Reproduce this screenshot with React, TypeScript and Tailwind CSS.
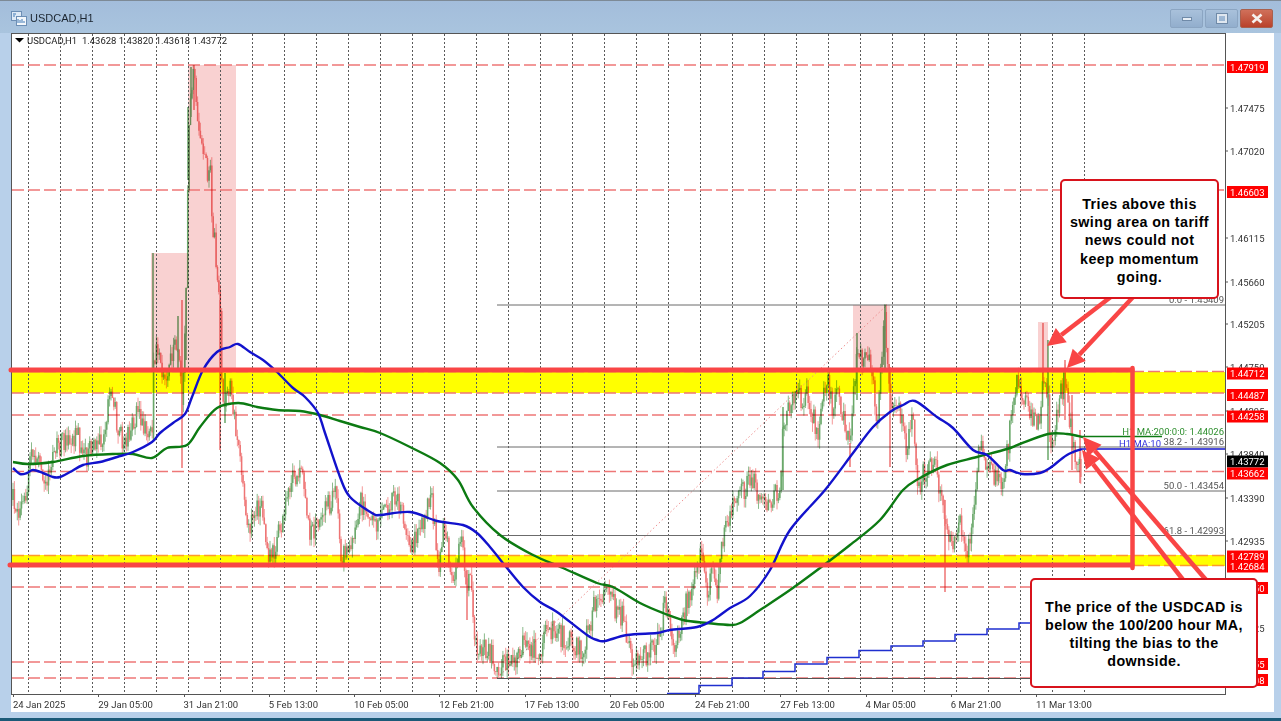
import React from 'react';

// rough price path, page pixel coordinates
const PATH: number[][] = [
  [13,500],[18,515],[27,495],[29,460],[40,455],[47,490],[53,455],[60,445],[70,440],[78,432],[83,462],[97,440],[102,447],[112,385],[118,430],[125,445],[135,415],[147,430],[152,440],[154,350],[160,360],[165,385],[172,355],[178,340],[182,400],[186,320],[188,150],[191,90],[194,68],[197,115],[200,125],[203,145],[207,170],[210,165],[212,225],[215,245],[218,280],[220,290],[222,400],[225,395],[230,390],[235,423],[240,455],[243,490],[247,530],[253,515],[262,500],[266,547],[272,558],[278,537],[283,520],[295,473],[302,475],[310,530],[320,530],[325,510],[337,495],[340,553],[347,558],[360,500],[377,527],[397,493],[410,553],[432,497],[438,570],[443,527],[453,577],[462,533],[467,600],[470,575],[475,647],[487,650],[493,655],[498,675],[508,655],[513,665],[523,645],[540,653],[548,625],[560,635],[583,653],[597,593],[608,598],[623,618],[633,660],[642,658],[660,640],[665,597],[675,647],[690,590],[702,555],[707,590],[713,575],[717,590],[723,540],[730,510],[750,480],[770,505],[780,490],[783,430],[792,403],[807,393],[818,437],[827,373],[832,407],[837,393],[850,443],[857,350],[860,360],[867,345],[872,367],[877,430],[885,315],[890,400],[897,393],[907,453],[912,407],[917,490],[925,470],[935,460],[945,530],[950,545],[960,520],[968,550],[975,500],[980,440],[985,470],[1003,482],[1017,380],[1033,420],[1040,430],[1043,370],[1048,400],[1050,455],[1058,410],[1065,375],[1072,440],[1080,470],
];

// long wicks that the noise would not produce: x, top, bottom, up?
const SPIKES: [number, number, number, boolean][] = [
  [153,253,370,true],[153.5,370,440,true],[188,107,180,true],[191,67,117,true],[194,65,110,false],[182,300,468,false],[178,316,370,true],[186,288,360,true],[220,300,450,false],[225,373,423,true],[1043,323,390,false],[1048,340,460,true],[1065,360,420,false],[1072,395,470,false],[1080,430,483,false],[885,305,370,true],[857,333,400,true],[783,407,490,true],[890,367,467,false],[945,500,592,false],[850,443,467,false],[467,570,620,false],
];

const MA100 = [[13,468],[20,474],[27,473],[33,470],[43,473],[53,477],[60,477],[70,472],[83,465],[100,462],[117,457],[133,452],[152,442],[160,433],[173,423],[185,414],[192,397],[203,370],[217,352],[230,347],[238,344],[250,352],[263,360],[277,372],[293,388],[305,397],[318,413],[325,433],[340,477],[350,497],[372,513],[380,515],[410,512],[437,521],[463,525],[477,533],[490,547],[507,568],[523,587],[540,602],[557,612],[587,635],[597,640],[605,641],[627,635],[657,633],[670,630],[697,627],[713,620],[730,608],[750,596],[770,570],[790,530],[825,490],[853,453],[873,427],[890,412],[903,405],[915,401],[937,417],[953,428],[973,450],[987,455],[1003,470],[1010,470],[1022,474],[1040,473],[1050,468],[1067,455],[1082,449]];
const MA200 = [[13,462],[28,464],[53,462],[83,456],[113,454],[133,454],[152,458],[167,448],[187,445],[200,427],[217,408],[238,403],[257,407],[277,410],[300,411],[320,415],[340,421],[360,427],[380,433],[410,447],[440,463],[458,480],[473,507],[500,535],[533,555],[563,568],[597,583],[613,587],[640,603],[663,613],[683,620],[707,623],[730,625],[740,623],[760,610],[790,590],[820,568],[850,545],[880,520],[903,490],[920,478],[947,465],[977,457],[1007,449],[1020,444],[1048,434],[1067,434],[1083,437]];
const STEPS = '667,693.5 699,693.5 699,685.5 732,685.5 732,678 763,678 763,671.5 795,671.5 795,664 827,664 827,657.5 859,657.5 859,650.5 891,650.5 891,646 923,646 923,641 955,641 955,634.5 987,634.5 987,629 1019,629 1019,623 1040,623';

const GRID = Array.from({ length: 34 }, (_, i) => 28 + i * 32);
const DASHED = [65, 190, 371.5, 393, 415, 471.5, 587, 662, 678];
const FIBS = [
  { y: 305, label: '0.0 - 1.45409' },
  { y: 447, label: '38.2 - 1.43916' },
  { y: 491, label: '50.0 - 1.43454' },
  { y: 535.5, label: '61.8 - 1.42993' },
];
const PRICES = [
  { y: 108, t: '1.47475' }, { y: 151, t: '1.47020' }, { y: 238, t: '1.46115' }, { y: 282, t: '1.45660' },
  { y: 324, t: '1.45205' }, { y: 367, t: '1.44750' }, { y: 411, t: '1.44295' }, { y: 454, t: '1.43840' },
  { y: 498, t: '1.43390' }, { y: 541, t: '1.42935' }, { y: 585, t: '1.42480' }, { y: 628, t: '1.42025' },
];
const TAGS = [
  { y: 67, t: '1.47919' }, { y: 192, t: '1.46603' }, { y: 373.5, t: '1.44712' }, { y: 395, t: '1.44487' },
  { y: 416.5, t: '1.44258' }, { y: 461.5, t: '1.43772', black: true }, { y: 473.5, t: '1.43662' },
  { y: 556.5, t: '1.42789' }, { y: 566.5, t: '1.42684' }, { y: 588, t: '1.42450' }, { y: 664, t: '1.41655' }, { y: 680, t: '1.41508' },
];
const DATES = ['24 Jan 2025', '29 Jan 05:00', '31 Jan 21:00', '5 Feb 13:00', '10 Feb 05:00', '12 Feb 21:00', '17 Feb 13:00', '20 Feb 05:00', '24 Feb 21:00', '27 Feb 13:00', '4 Mar 05:00', '6 Mar 21:00', '11 Mar 13:00'];

function interp(x: number) {
  for (let i = 1; i < PATH.length; i++) {
    if (x <= PATH[i][0]) {
      const [x0, y0] = PATH[i - 1];
      const [x1, y1] = PATH[i];
      return y0 + ((y1 - y0) * (x - x0)) / (x1 - x0);
    }
  }
  return PATH[PATH.length - 1][1];
}

function buildCandles() {
  let seed = 4711;
  const rnd = () => {
    seed = (seed * 16807) % 2147483647;
    return seed / 2147483647;
  };
  const up = { wick: '', body: '' };
  const down = { wick: '', body: '' };
  let prev = interp(13);
  for (let x = 13; x <= 1081; x += 1.42) {
    const close = interp(x) + (rnd() - 0.5) * 24;
    const top = Math.max(65, Math.min(prev, close) - rnd() * 9);
    const bottom = Math.min(678, Math.max(prev, close) + rnd() * 9);
    const bucket = close < prev ? up : down;
    bucket.wick += `M${x.toFixed(1)} ${top.toFixed(1)}V${bottom.toFixed(1)}`;
    bucket.body += `M${x.toFixed(1)} ${Math.max(65, Math.min(prev, close)).toFixed(1)}V${Math.min(678, Math.max(prev, close)).toFixed(1)}`;
    prev = close;
  }
  for (const [x, a, b, isUp] of SPIKES) {
    (isUp ? up : down).body += `M${x} ${a}V${b}`;
  }
  return { up, down };
}

const candles = buildCandles();

// catmull-rom through the points so the averages bend instead of kinking
function smooth(pts: number[][]) {
  let d = `M${pts[0][0]} ${pts[0][1]}`;
  for (let i = 0; i < pts.length - 1; i++) {
    const p0 = pts[Math.max(i - 1, 0)];
    const p1 = pts[i];
    const p2 = pts[i + 1];
    const p3 = pts[Math.min(i + 2, pts.length - 1)];
    const c1x = p1[0] + (p2[0] - p0[0]) / 6;
    const c1y = p1[1] + (p2[1] - p0[1]) / 6;
    const c2x = p2[0] - (p3[0] - p1[0]) / 6;
    const c2y = p2[1] - (p3[1] - p1[1]) / 6;
    d += `C${c1x.toFixed(1)} ${c1y.toFixed(1)} ${c2x.toFixed(1)} ${c2y.toFixed(1)} ${p2[0]} ${p2[1]}`;
  }
  return d;
}

// line with a filled triangular head, all in page pixels
const Arrow = ({ from, to }: { from: number[]; to: number[] }) => {
  const dx = to[0] - from[0];
  const dy = to[1] - from[1];
  const len = Math.hypot(dx, dy);
  const ux = dx / len;
  const uy = dy / len;
  const bx = to[0] - ux * 18;
  const by = to[1] - uy * 18;
  const head = `${to[0]},${to[1]} ${bx - uy * 9},${by + ux * 9} ${bx + uy * 9},${by - ux * 9}`;
  return (
    <g>
      <line x1={from[0]} y1={from[1]} x2={bx} y2={by} stroke="#f94545" strokeWidth={4.5} />
      <polygon points={head} fill="#f94545" />
    </g>
  );
};

const App = () => {
  return (
    <div className="relative w-[1281px] h-[721px] flex flex-col overflow-hidden bg-[#b8d0ea] font-['Liberation_Sans',sans-serif]">
      {/* Title bar */}
      <div className="h-[33px] flex items-start border-t border-[#7d8a96] bg-gradient-to-b from-[#a3bddb] to-[#a9c4de]">
        <svg width="16" height="15" viewBox="0 0 16 15" className="ml-[11px] mt-[10px]">
          <rect x="0.5" y="0.5" width="10" height="9" fill="#dfeaf6" stroke="#6d8fb5" />
          <rect x="5.5" y="5.5" width="10" height="9" fill="#f3f7fb" stroke="#6d8fb5" />
          <path d="M2 3h3M2 5h2M7 8v4M9 9v3M11 8v4M13 10v2" stroke="#3f78b5" strokeWidth="1" />
        </svg>
        <span className="ml-[3px] mt-[9px] text-[11px] leading-[16px] text-[#1b2530]">USDCAD,H1</span>
        <div className="ml-auto mr-[8px] mt-[8px] flex gap-[2px]">
          <div className="w-[33px] h-[19px] flex items-center justify-center rounded-[2px] border border-[#8ba5c2] bg-gradient-to-b from-[#a9c1db] to-[#92aecd]">
            <div className="w-[10px] h-[4px] bg-[#e8eef5] border border-[#6f8aa8]" />
          </div>
          <div className="w-[33px] h-[19px] flex items-center justify-center rounded-[2px] border border-[#8ba5c2] bg-gradient-to-b from-[#a9c1db] to-[#92aecd]">
            <div className="w-[10px] h-[9px] border-2 border-[#dfe7f0] outline outline-1 outline-[#6f8aa8]" />
          </div>
          <div className="w-[33px] h-[19px] flex items-center justify-center rounded-[2px] border border-[#a8604e] bg-gradient-to-b from-[#d0705a] to-[#b9412a]">
            <svg width="12" height="11" viewBox="0 0 12 11">
              <path d="M1.5 1.5l9 8M10.5 1.5l-9 8" stroke="#f6f1ee" strokeWidth="2.6" />
            </svg>
          </div>
        </div>
      </div>

      {/* Chart window */}
      <div className="h-[679px] pl-[11px] pr-[7px]">
        <div className="h-full flex flex-col bg-white">
          <div className="flex">
            <div className="relative w-[1215px] h-[662px] border border-[#555]">
              <svg viewBox="12 34 1213 660" className="block w-[1213px] h-[660px]">
                {[[151, 253, 37, 117], [188, 65, 48, 305], [853, 305, 37, 65], [1038, 322, 10, 48]].map(([x, y, w, h]) => (
                  <rect key={x} x={x} y={y} width={w} height={h} fill="#f9d1d1" />
                ))}
                <rect x="12" y="372" width="1213" height="21" fill="#ffff00" />
                <rect x="12" y="555" width="1213" height="11" fill="#ffff00" />

                {GRID.map((x) => (
                  <line key={x} x1={x + 0.5} y1="34" x2={x + 0.5} y2="694" stroke="#5a5a5a" strokeDasharray="2 2" />
                ))}
                {DASHED.map((y) => (
                  <line key={y} x1="12" y1={y} x2="1225" y2={y} stroke="#ee7777" strokeWidth="1.3" strokeDasharray="12 4" />
                ))}
                <line x1="12" y1="555.5" x2="1225" y2="555.5" stroke="#ff9a2a" strokeWidth="1.4" strokeDasharray="12 4" />
                <line x1="12" y1="565.5" x2="1225" y2="565.5" stroke="#ff9a2a" strokeWidth="1.4" strokeDasharray="12 4" />

                {/* fib retracement */}
                <line x1="497" y1="678" x2="887" y2="305" stroke="#ef8f8f" strokeDasharray="1.5 2.5" />
                {FIBS.map((f) => (
                  <g key={f.y}>
                    <line x1="497" y1={f.y} x2="1225" y2={f.y} stroke="#6b6b6b" />
                    <text x="1224" y={f.y - 2} textAnchor="end" className="fill-[#555] text-[9.5px] font-['Roboto']">{f.label}</text>
                  </g>
                ))}
                <line x1="497" y1="678.5" x2="1225" y2="678.5" stroke="#555" />

                {/* candles */}
                <g className="mix-blend-multiply" fill="none">
                  <path d={candles.down.wick} stroke="#f27d7d" strokeWidth="0.8" />
                  <path d={candles.up.wick} stroke="#6da86d" strokeWidth="0.8" />
                  <path d={candles.down.body} stroke="#ee7474" strokeWidth="1.5" />
                  <path d={candles.up.body} stroke="#6aa86a" strokeWidth="1.5" />
                </g>

                <polyline points={STEPS} fill="none" stroke="#1f2fcf" strokeWidth="1.5" />
                <path d={smooth(MA200)} fill="none" stroke="#0c7a12" strokeWidth="2.4" />
                <path d={smooth(MA100)} fill="none" stroke="#1212cc" strokeWidth="2.4" />
                <line x1="1083" y1="436.5" x2="1162" y2="436.5" stroke="#0c7a12" strokeWidth="1.4" />
                <line x1="1082" y1="449" x2="1225" y2="449" stroke="#1212cc" strokeWidth="1.6" />
                <text x="1224" y="435" textAnchor="end" className="fill-[#2f8f2f] text-[9.5px] font-['Roboto']">H1 MA:200:0:0: 1.44026</text>
                <text x="1161" y="447" textAnchor="end" className="fill-[#3030dd] text-[9.5px] font-['Roboto']">H1 MA:10</text>

                <path d="M15 38h9l-4.5 4.5z" fill="#000" />
                <text x="27" y="44" className="fill-[#222] text-[9.5px] font-['Roboto']" xmlSpace="preserve">USDCAD,H1  1.43628 1.43820 1.43618 1.43772</text>
              </svg>
            </div>

            {/* Price axis */}
            <svg viewBox="1226 33 48 662" className="block w-[48px] h-[662px]">
              {PRICES.map((p) => (
                <g key={p.t}>
                  <line x1="1226" y1={p.y} x2="1228" y2={p.y} stroke="#555" />
                  <text x="1230" y={p.y + 3.5} className="fill-[#333] text-[9.5px] font-['Roboto']">{p.t}</text>
                </g>
              ))}
              {TAGS.map((p) => (
                <g key={p.t}>
                  <rect x="1227" y={p.y - 6} width="41" height="12" fill={p.black ? '#000' : '#ff0000'} />
                  <text x="1230" y={p.y + 3.5} className="fill-white text-[9.5px] font-['Roboto']">{p.t}</text>
                </g>
              ))}
            </svg>
          </div>

          {/* Time axis */}
          <div className="flex pl-[2px]">
            {DATES.map((d) => (
              <div key={d} className="w-[85.25px] shrink-0">
                <div className="w-px h-[2px] bg-[#555]" />
                <div className="mt-[2px] text-[9.5px] leading-[12px] text-[#333] font-['Roboto']">{d}</div>
              </div>
            ))}
          </div>
        </div>
      </div>

      <div className="h-[6px]" />
      <div className="flex-1 bg-[#1c5a78]" />

      {/* Hand-drawn annotations */}
      <svg viewBox="0 0 1281 721" className="absolute inset-0 w-[1281px] h-[721px] pointer-events-none">
        <path d="M11 370H1132M10 565H1132" stroke="#f94545" strokeWidth="5" strokeLinecap="round" />
        <path d="M1132.5 368V568" stroke="#f94545" strokeWidth="4.5" strokeLinecap="round" />
        <Arrow from={[1112, 296]} to={[1047, 346]} />
        <Arrow from={[1134, 296]} to={[1067, 368]} />
        <Arrow from={[1207, 581]} to={[1083, 437]} />
        <Arrow from={[1184, 581]} to={[1082, 450]} />
      </svg>

      <div className="absolute left-[1060px] top-[179px] w-[159px] h-[120px] flex items-center justify-center rounded-[5px] border-2 border-[#d8131c] bg-white pt-[3px] text-center text-[14.3px] leading-[18.2px] tracking-[0.4px] font-bold text-black">
        <p>Tries above this<br />swing area on tariff<br />news could not<br />keep momentum<br />going.</p>
      </div>
      <div className="absolute left-[1030px] top-[578px] w-[228px] h-[110px] flex items-center justify-center rounded-[5px] border-2 border-[#d8131c] bg-white pt-[2px] text-center text-[14.3px] leading-[18.2px] tracking-[0.4px] font-bold text-black">
        <p>The price of the USDCAD is<br />below the 100/200 hour MA,<br />tilting the bias to the<br />downside.</p>
      </div>
    </div>
  );
};

export default App;
